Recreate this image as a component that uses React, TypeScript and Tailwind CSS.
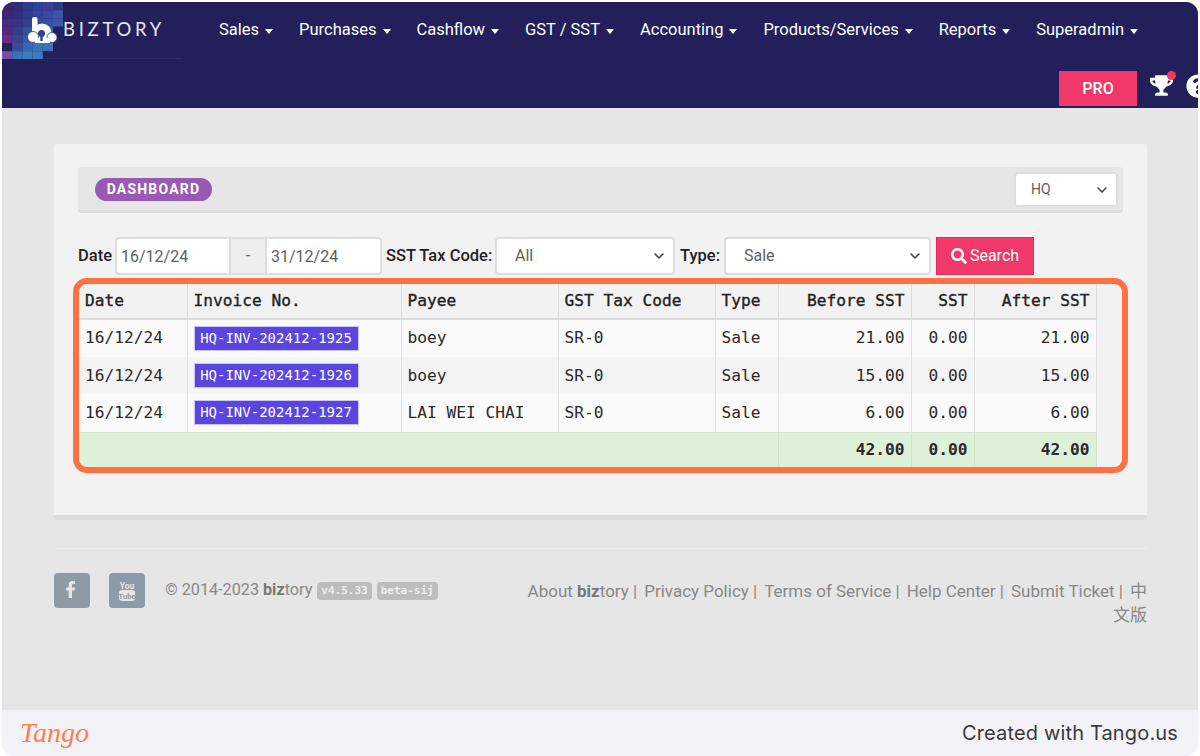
import { FaFacebookF, FaQuestionCircle, FaSearch, FaTrophy } from 'react-icons/fa';
import { ChevronDown } from 'lucide-react';

const navItems = ['Sales', 'Purchases', 'Cashflow', 'GST / SST', 'Accounting', 'Products/Services', 'Reports', 'Superadmin'];

const footerLinks = ['Privacy Policy', 'Terms of Service', 'Help Center', 'Submit Ticket'];

const rows = [
  { date: '16/12/24', invoice: 'HQ-INV-202412-1925', payee: 'boey', before: '21.00', sst: '0.00', after: '21.00' },
  { date: '16/12/24', invoice: 'HQ-INV-202412-1926', payee: 'boey', before: '15.00', sst: '0.00', after: '15.00' },
  { date: '16/12/24', invoice: 'HQ-INV-202412-1927', payee: 'LAI WEI CHAI', before: '6.00', sst: '0.00', after: '6.00' },
];

const mosaic: [number, number, string][] = [
  [0, 0, '#3a2470'], [1, 0, '#332a78'], [2, 0, '#2c3a8c'], [3, 0, '#30409a'], [4, 0, '#3d3f95'], [5, 0, '#2f3a85'],
  [0, 1, '#402678'], [1, 1, '#342c7c'], [2, 1, '#2e3c90'], [3, 1, '#32459c'], [4, 1, '#354aa0'], [5, 1, '#3a55aa'],
  [0, 2, '#4a2a80'], [1, 2, '#3a3385'], [2, 2, '#30428f'], [3, 2, '#344ca0'], [4, 2, '#3450a5'], [5, 2, '#3a55aa'],
  [0, 3, '#55287f'], [1, 3, '#3a3a88'], [2, 3, '#33509f'], [3, 3, '#3558ac'], [4, 3, '#3860b0'],
  [0, 4, '#6a2a88'], [1, 4, '#3f4090'], [2, 4, '#3558a8'], [3, 4, '#3868b4'], [4, 4, '#3c68b4'],
  [0, 5, '#22245a'], [1, 5, '#3a4c9c'], [2, 5, '#3868b4'], [3, 5, '#3a74bc'], [4, 5, '#3c70b8'],
  [0, 6, '#7a4fa5'], [1, 6, '#3c70b8'], [2, 6, '#3a80c0'], [3, 6, '#3c78bc'],
];

function Caret() {
  return <span className="ml-[6px] mt-[2px] inline-block h-0 w-0 border-x-[4.500px] border-t-[5px] border-x-transparent border-t-white" />;
}

function LogoMark() {
  return (
    <svg width="61" height="57" viewBox="0 0 61 57" className="shrink-0">
      {mosaic.map(([x, y, fill]) => (
        <rect key={`${x}-${y}`} x={x * 10.2} y={y * 8.2} width="10.2" height="8.2" fill={fill} />
      ))}
      {/* b with cloud lobes and keyhole */}
      <rect x="30" y="15" width="5.500" height="17" rx="2" fill="white" />
      <circle cx="40" cy="31" r="9.500" fill="white" />
      <circle cx="31" cy="35" r="5.500" fill="white" stroke="#2f3f92" strokeWidth="0.800" />
      <circle cx="50" cy="35.500" r="5" fill="white" stroke="#2f3f92" strokeWidth="0.800" />
      <rect x="33" y="36" width="15" height="5" fill="white" />
      <circle cx="39.500" cy="31.500" r="3.500" fill="#2f3f92" />
      <rect x="38.300" y="32" width="2.400" height="7" fill="#2f3f92" />
    </svg>
  );
}

function YoutubeMark() {
  return (
    <svg width="18" height="22" viewBox="0 0 18 22">
      <text x="9" y="8.500" textAnchor="middle" fontSize="8.500" fontWeight="700" fill="#e6e6e6" fontFamily="Roboto, sans-serif">You</text>
      <rect x="1" y="10" width="16" height="11" rx="3" fill="#e6e6e6" />
      <text x="9" y="18.500" textAnchor="middle" fontSize="7.500" fontWeight="700" fill="#8e9aa6" fontFamily="Roboto, sans-serif">Tube</text>
    </svg>
  );
}

function SelectBox({ value, className, small }: { value: string; className: string; small?: boolean }) {
  return (
    <div className={`relative shrink-0 ${className}`}>
      <select
        defaultValue={value}
        className={`h-full w-full appearance-none rounded-[4px] border-2 border-[#dedede] bg-white text-[#5f5f5f] outline-none ${small ? 'pl-[15px] text-[14px]' : 'pl-[18px] text-[16px]'}`}
      >
        <option>{value}</option>
      </select>
      <ChevronDown size={16} strokeWidth={2.4} className="pointer-events-none absolute right-[8px] top-1/2 -translate-y-1/2 text-[#444]" />
    </div>
  );
}

const headCell = 'border-r border-[#dddddd] px-[6px] font-normal [-webkit-text-stroke:0.35px_#222]';
const bodyCell = 'border-r border-[#e2e2e2] px-[6px]';
const totalCell = 'border-r border-[#d3e4cb] px-[6px] text-right';

export default function App() {
  return (
    <div className="h-[756px] w-[1200px] overflow-hidden bg-white px-[2px] pt-[2px] font-['Roboto',sans-serif]">
      <div className="flex h-[754px] flex-col overflow-hidden rounded-b-[14px] rounded-t-[12px] bg-[#e6e6e6]">
        {/* top nav */}
        <header className="h-[106px] shrink-0 overflow-hidden bg-[#221f5a]">
          <div className="flex h-[57px]">
            <div className="flex w-[180px] shrink-0 border-b border-[#2f2d68]">
              <LogoMark />
              <span className="mt-[17px] text-[18.500px] leading-[21px] tracking-[3.700px] text-[#e8e8f0] font-['Lato',sans-serif]">BIZTORY</span>
            </div>
            <nav className="ml-[24px] flex items-start">
              {navItems.map(item => (
                <span key={item} className="flex items-center whitespace-nowrap px-[13px] pt-[18px] text-[16.500px] leading-[20px] text-white">
                  {item}
                  <Caret />
                </span>
              ))}
            </nav>
          </div>
          <div className="mt-[12px] flex items-start pl-[1057px]">
            <div className="flex h-[35px] w-[78px] shrink-0 items-center justify-center bg-[#f0386b] text-[16px] font-medium text-white">PRO</div>
            <div className="relative ml-[13px] mt-[3px] shrink-0">
              <FaTrophy size={23} className="text-white" />
              <span className="absolute -top-[3px] left-[17px] h-[9px] w-[9px] rounded-full bg-[#f0386b]" />
            </div>
            <FaQuestionCircle size={24} className="ml-[13px] mt-[3px] shrink-0 text-white" />
          </div>
        </header>

        {/* content */}
        <main className="flex-1 pl-[52px] pr-[51px] pt-[36px]">
          <section className="h-[376px] rounded-[3px] border-b-[5px] border-[#dddddd] bg-[#f2f2f2] px-[24px] pt-[23px]">
            <div className="flex h-[46px] items-center justify-between rounded-[4px] border-b-[3px] border-[#dddddd] bg-[#e6e6e6] pl-[17px] pr-[5px] pt-[2px]">
              <span className="flex h-[23px] w-[117px] items-center justify-center rounded-full bg-[#9b59b6] text-[14px] font-bold tracking-[1.200px] text-white">DASHBOARD</span>
              <SelectBox small value="HQ" className="h-[35px] w-[104px]" />
            </div>

            <div className="mt-[24px] flex h-[38px] items-center text-[16.500px] text-[#222]">
              <label className="w-[37px] font-medium">Date</label>
              <input readOnly value="16/12/24" className="h-full w-[116px] rounded-l-[4px] border-2 border-[#dedede] bg-white pl-[4px] text-[16px] text-[#5f5f5f] outline-none" />
              <span className="flex h-full w-[34px] items-center justify-center border-y-2 border-[#dedede] bg-[#eeeeee] text-[#666]">-</span>
              <input readOnly value="31/12/24" className="h-full w-[117px] rounded-r-[4px] border-2 border-[#dedede] bg-white pl-[4px] text-[16px] text-[#5f5f5f] outline-none" />
              <label className="ml-[4px] w-[109px] whitespace-nowrap font-medium">SST Tax Code:</label>
              <SelectBox value="All" className="h-full w-[180px]" />
              <label className="ml-[5px] w-[44px] font-medium">Type:</label>
              <SelectBox value="Sale" className="h-full w-[207px]" />
              <button className="ml-[5px] flex h-full w-[98px] items-center justify-center gap-[3px] border border-[#e92a5f] bg-[#f0386b] text-[16px] text-white">
                <FaSearch size={16} />
                Search
              </button>
            </div>

            {/* table with the orange annotation frame */}
            <div className="relative mt-[3px] pl-[1px] pt-[5px] font-['DejaVu_Sans_Mono',monospace]">
              <table className="w-[1017px] table-fixed border-collapse text-[16.200px] leading-[20px] text-[#2a2a2a]">
                <colgroup>
                  <col className="w-[108px]" />
                  <col className="w-[214px]" />
                  <col className="w-[157px]" />
                  <col className="w-[157px]" />
                  <col className="w-[63px]" />
                  <col className="w-[133px]" />
                  <col className="w-[63px]" />
                  <col className="w-[122px]" />
                </colgroup>
                <thead>
                  <tr className="h-[36px] border-b-2 border-[#dddddd] bg-[#f2f2f2] text-[#222]">
                    <th className={`${headCell} text-left`}>Date</th>
                    <th className={`${headCell} text-left`}>Invoice No.</th>
                    <th className={`${headCell} text-left`}>Payee</th>
                    <th className={`${headCell} text-left`}>GST Tax Code</th>
                    <th className={`${headCell} text-left`}>Type</th>
                    <th className={`${headCell} text-right`}>Before SST</th>
                    <th className={`${headCell} text-right`}>SST</th>
                    <th className={`${headCell} text-right`}>After SST</th>
                  </tr>
                </thead>
                <tbody>
                  {rows.map((r, i) => (
                    <tr key={r.invoice} className={`h-[37.700px] ${i === 1 ? 'bg-[#f4f4f4]' : 'bg-[#fafafa]'}`}>
                      <td className={bodyCell}>{r.date}</td>
                      <td className={bodyCell}>
                        <span className="inline-block h-[25px] w-[165px] border border-[#c9c6f5] bg-[#5a45e0] text-center text-[14px] leading-[23px] text-white">{r.invoice}</span>
                      </td>
                      <td className={bodyCell}>{r.payee}</td>
                      <td className={bodyCell}>SR-0</td>
                      <td className={bodyCell}>Sale</td>
                      <td className={`${bodyCell} text-right`}>{r.before}</td>
                      <td className={`${bodyCell} text-right`}>{r.sst}</td>
                      <td className={`${bodyCell} text-right`}>{r.after}</td>
                    </tr>
                  ))}
                  <tr className="h-[35px] border-t border-[#d6e3cd] bg-[#dff0d8] font-bold">
                    <td colSpan={5} className="border-r border-[#d3e4cb]" />
                    <td className={totalCell}>42.00</td>
                    <td className={totalCell}>0.00</td>
                    <td className={totalCell}>42.00</td>
                  </tr>
                </tbody>
              </table>
              <div className="pointer-events-none absolute -left-[5px] top-0 h-[195px] w-[1055px] rounded-[14px] border-[6px] border-[#ff7043]" />
            </div>
          </section>

          {/* footer */}
          <footer className="mt-[28px] flex border-t border-[#ececec] pt-[24px]">
            <a className="flex h-[35px] w-[36px] shrink-0 items-center justify-center rounded-[4px] bg-[#8e9aa6] text-[#e6e6e6]">
              <FaFacebookF size={17} className="mb-[2px] mr-[3px]" />
            </a>
            <a className="ml-[19px] flex h-[35px] w-[36px] shrink-0 items-center justify-center rounded-[4px] bg-[#8e9aa6]">
              <YoutubeMark />
            </a>
            <div className="ml-[20px] flex h-[35px] shrink-0 items-center text-[16.200px] text-[#888888]">
              © 2014-2023&nbsp;<b className="text-[#777]">biz</b>tory
              <span className="ml-[5px] rounded-[4px] bg-[#bdbdbd] px-[4px] py-[2px] font-['DejaVu_Sans_Mono',monospace] text-[11px] font-bold leading-[14px] text-[#eeeeee]">v4.5.33</span>
              <span className="ml-[5px] rounded-[4px] bg-[#bdbdbd] px-[4px] py-[2px] font-['DejaVu_Sans_Mono',monospace] text-[11px] font-bold leading-[14px] text-[#eeeeee]">beta-sij</span>
            </div>
            <p className="ml-auto w-[625px] pt-[6px] text-right text-[17px] leading-[24px] text-[#888888] font-['Roboto','Noto_Sans_CJK_SC',sans-serif]">
              About <b className="text-[#777]">biz</b>tory <span className="mr-[7px]">|</span>
              {footerLinks.map(link => (
                <span key={link}>{link} <span className="mr-[7px]">|</span></span>
              ))}
              中文版
            </p>
          </footer>
        </main>

        {/* Tango bar */}
        <div className="flex h-[46px] shrink-0 items-center justify-between bg-[#f3f2f7] pl-[18px] pr-[20px]">
          <span className="font-['Liberation_Serif',serif] text-[28px] italic leading-none text-[#ff7f55]">Tango</span>
          <span className="font-['Inter',sans-serif] text-[20px] tracking-[0.150px] text-[#3a3a3a]">Created with Tango.us</span>
        </div>
      </div>
    </div>
  );
}
